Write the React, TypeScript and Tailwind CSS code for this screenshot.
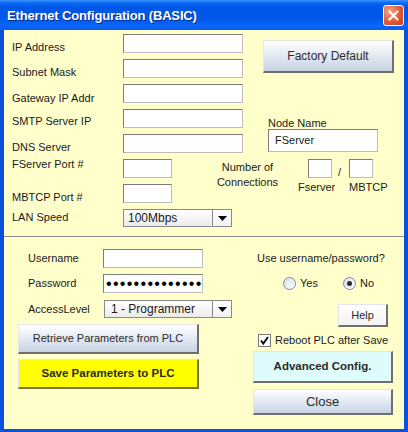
import React from "react";

const inputCls =
  "h-[19px] bg-white border border-t-[#7c7c7c] border-l-[#7c7c7c] border-b-[#bdbdbd] border-r-[#bdbdbd]";

const raisedCls =
  "flex items-center justify-center border-t border-l border-t-[#e6e6e6] border-l-[#e6e6e6] border-r-2 border-b-2 border-r-[#6f6f6f] border-b-[#6f6f6f]";

const blueBtn =
  "bg-[linear-gradient(to_bottom,#ffffff_0%,#eef2f8_30%,#c6d2e3_100%)]";

function Input({ w, className = "", children }: { w: string; className?: string; children?: React.ReactNode }) {
  return <div className={`${inputCls} ${w} ${className}`}>{children}</div>;
}

function Combo({ value, textW, pad, className = "" }: { value: string; textW: string; pad: string; className?: string }) {
  return (
    <div className={`flex h-[18px] ${className}`}>
      <div
        className={`${textW} h-full border border-[#8a8a8a] bg-[linear-gradient(to_bottom,#ffffff,#ebebeb)] text-[12px] leading-[16px] text-[#1a1a1a] ${pad} overflow-hidden whitespace-nowrap`}
      >
        {value}
      </div>
      <div className="w-[19px] h-full border border-l-0 border-[#8a8a8a] bg-[linear-gradient(to_bottom,#ffffff,#f1f1f1)] flex items-center justify-center">
        <svg width="9" height="5" viewBox="0 0 9 5">
          <polygon points="0,0 9,0 4.5,5" fill="#000" />
        </svg>
      </div>
    </div>
  );
}

function Radio({ checked }: { checked?: boolean }) {
  return (
    <span className="w-[13px] h-[13px] rounded-full border border-[#7d8a9c] bg-[linear-gradient(135deg,#d9dee6,#ffffff)] flex items-center justify-center">
      {checked && <span className="w-[5px] h-[5px] rounded-full bg-[#2a2a2a]" />}
    </span>
  );
}

export default function App() {
  return (
    <div className="w-[408px] h-[432px] flex flex-col bg-[#0b4fdd] font-['Liberation_Sans',Arial,sans-serif] text-[#1a1a1a] overflow-hidden">
      {/* Title bar */}
      <div className="h-[30px] flex items-center justify-between pl-[7px] pr-[4px] bg-[linear-gradient(to_bottom,#3d95ff_0%,#0a68f2_10%,#0056e6_25%,#0057ea_60%,#0966f8_85%,#0a5cef_100%)]">
        <span className="text-white font-bold text-[13px] tracking-[-0.15px] leading-none [text-shadow:1px_1px_0_#0a2a8a]">
          Ethernet Configuration (BASIC)
        </span>
        <div className="w-[21px] h-[21px] rounded-[3px] border border-white bg-[radial-gradient(circle_at_30%_30%,#f4a588,#e05a36_55%,#c4401c)] flex items-center justify-center">
          <svg width="13" height="13" viewBox="0 0 13 13">
            <path d="M2.5 2.5 L10.5 10.5 M10.5 2.5 L2.5 10.5" stroke="#fff" strokeWidth="2.2" strokeLinecap="round" />
          </svg>
        </div>
      </div>

      {/* Content */}
      <div className="flex-1 mx-[4px] mb-[3px] bg-[#ffffcc] flex flex-col text-[11px]">
        {/* Part A */}
        <div className="flex h-[126px]">
          <div className="w-[119px] pl-[8px] flex flex-col leading-[14px]">
            <span className="mt-[10px]">IP Address</span>
            <span className="mt-[11px]">Subnet Mask</span>
            <span className="mt-[12px]">Gateway IP Addr</span>
            <span className="mt-[9px]">SMTP Server IP</span>
            <span className="mt-[12px]">DNS Server</span>
          </div>
          <div className="w-[120px] flex flex-col">
            <Input w="w-[120px]" className="mt-[4px]" />
            <Input w="w-[120px]" className="mt-[6px]" />
            <Input w="w-[120px]" className="mt-[6px]" />
            <Input w="w-[120px]" className="mt-[6px]" />
            <Input w="w-[120px]" className="mt-[6px]" />
          </div>
          <div className="ml-[20px] flex flex-col">
            <button className={`${raisedCls} ${blueBtn} mt-[10px] w-[131px] h-[33px] text-[12px] text-[#2a2a2a]`}>
              Factory Default
            </button>
            <span className="ml-[5px] mt-[44px] leading-[12px]">Node Name</span>
            <div className="ml-[5px] w-[110px] h-[23px] bg-white border border-t-[#7c7c7c] border-l-[#7c7c7c] border-b-[#bdbdbd] border-r-[#bdbdbd] pl-[6px] flex items-center">
              FServer
            </div>
          </div>
        </div>

        {/* Part B1 */}
        <div className="flex h-[49px]">
          <div className="w-[119px] pl-[8px] flex flex-col leading-[14px]">
            <span className="mt-[1px]">FServer Port #</span>
            <span className="mt-[19px]">MBTCP Port #</span>
          </div>
          <div className="w-[49px] flex flex-col">
            <Input w="w-[49px]" className="mt-[3px]" />
            <Input w="w-[49px]" className="mt-[6px]" />
          </div>
          <div className="ml-[43px] w-[65px] mt-[4px] text-center leading-[15px]">
            Number of
            <br />
            Connections
          </div>
          <div className="ml-[18px] w-[37px] flex flex-col">
            <Input w="w-[24px]" className="ml-[10px] mt-[3px]" />
            <span className="mt-[2px] leading-[14px]">Fserver</span>
          </div>
          <span className="ml-[3px] mt-[9px] leading-[14px] w-[4px]">/</span>
          <div className="ml-[7px] flex flex-col">
            <Input w="w-[24px]" className="mt-[3px]" />
            <span className="mt-[2px] leading-[14px]">MBTCP</span>
          </div>
        </div>

        {/* Part B2 */}
        <div className="flex h-[31px]">
          <div className="w-[119px] pl-[8px] pt-[5px] leading-[14px]">LAN Speed</div>
          <Combo value="100Mbps" textW="w-[90px]" pad="pl-[4px]" className="mt-[4px]" />
        </div>

        {/* Separator */}
        <div className="h-px bg-[#8a8a8a]" />
        <div className="h-px bg-white" />

        {/* Bottom section */}
        <div className="flex pl-[14px]">
          <div className="w-[235px] flex flex-col">
            <div className="flex items-center mt-[11px] h-[19px]">
              <span className="w-[85px] pl-[10px]">Username</span>
              <Input w="w-[100px]" />
            </div>
            <div className="flex items-center mt-[6px] h-[19px]">
              <span className="w-[85px] pl-[10px]">Password</span>
              <Input w="w-[100px]" className="flex items-center overflow-hidden pl-[2px]">
                <span className="text-[16px] leading-[17px] tracking-[1.3px] whitespace-nowrap text-black">
                  ••••••••••••••
                </span>
              </Input>
            </div>
            <div className="flex items-center mt-[7px] h-[18px]">
              <span className="w-[85px] pl-[10px]">AccessLevel</span>
              <Combo value="1 - Programmer" textW="w-[109px]" pad="pl-[6px]" className="ml-[1px]" />
            </div>
            <button className={`${raisedCls} ${blueBtn} mt-[6px] w-[181px] h-[30px] text-[11px] text-[#2a2a2a]`}>
              Retrieve Parameters from PLC
            </button>
            <button
              className={`${raisedCls} bg-[#ffff00] border-r-[#77773a] border-b-[#77773a] mt-[5px] w-[181px] h-[30px] text-[11.5px] font-bold text-[#2a2a2a]`}
            >
              Save Parameters to PLC
            </button>
          </div>
          <div className="flex flex-col">
            <span className="ml-[4px] mt-[13px] leading-[14px]">Use username/password?</span>
            <div className="flex items-center mt-[11px] h-[14px]">
              <span className="ml-[30px]">
                <Radio />
              </span>
              <span className="ml-[4px]">Yes</span>
              <span className="ml-[25px]">
                <Radio checked />
              </span>
              <span className="ml-[4px]">No</span>
            </div>
            <button
              className={`${raisedCls} bg-[linear-gradient(to_bottom,#ffffff,#f3f3f3)] mt-[14px] ml-[85px] w-[50px] h-[23px] text-[11px] text-[#2a2a2a]`}
            >
              Help
            </button>
            <div className="flex items-center mt-[7px] ml-[5px] h-[13px]">
              <span className="w-[13px] h-[13px] border border-[#7a7a7a] bg-white flex items-center justify-center">
                <svg width="11" height="11" viewBox="0 0 11 11">
                  <path d="M2 5.5 L4.3 8.5 L9 2" stroke="#111" strokeWidth="2" fill="none" />
                </svg>
              </span>
              <span className="ml-[4px]">Reboot PLC after Save</span>
            </div>
            <button
              className={`${raisedCls} bg-[#defcfc] mt-[4px] w-[140px] h-[32px] text-[11.5px] font-bold text-[#2a2a2a]`}
            >
              Advanced Config.
            </button>
            <button className={`${raisedCls} ${blueBtn} mt-[6px] w-[140px] h-[26px] text-[13px] text-[#2a2a2a]`}>
              Close
            </button>
          </div>
        </div>
      </div>
    </div>
  );
}
